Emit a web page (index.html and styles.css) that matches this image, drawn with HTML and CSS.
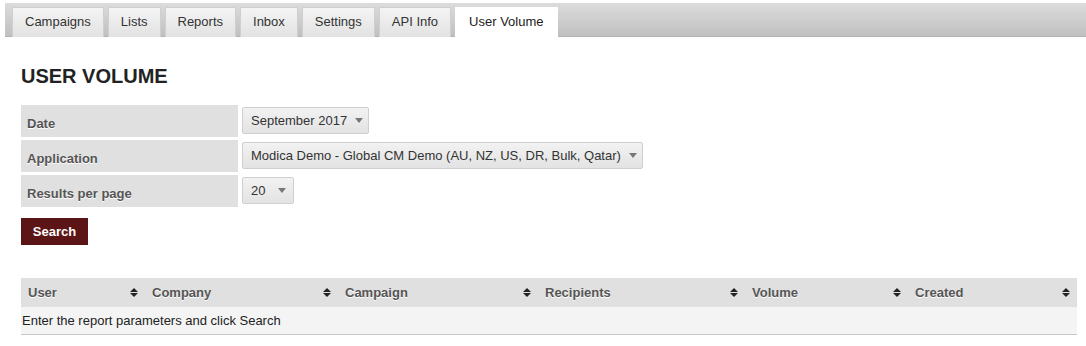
FILE: index.html
```html
<!DOCTYPE html>
<html>
<head lang="en">
    <meta charset="UTF-8">
    <title>User Volume</title>
    <link rel="stylesheet" href="styles.css">
</head>
<body>

    <!-- tabs -->
    <div class="tabs">
        <a class="tab" href="#">Campaigns</a>
        <a class="tab" href="#">Lists</a>
        <a class="tab" href="#">Reports</a>
        <a class="tab" href="#">Inbox</a>
        <a class="tab" href="#">Settings</a>
        <a class="tab" href="#">API Info</a>
        <a class="tab current" href="#">User Volume</a>
    </div>

    <div class="content">
        <h1>USER VOLUME</h1>

        <div class="form">
            <div class="label">Date</div>
            <div class="field"><span class="select">September 2017<i class="caret"></i></span></div>
            <div class="label">Application</div>
            <div class="field"><span class="select">Modica Demo - Global CM Demo (AU, NZ, US, DR, Bulk, Qatar)<i class="caret"></i></span></div>
            <div class="label">Results per page</div>
            <div class="field"><span class="select">20<i class="caret wide"></i></span></div>
        </div>

        <button class="btn">Search</button>

        <div class="report">
            <div class="head">
                <div class="th">User<svg width="8" height="9" viewBox="0 0 8 9"><polygon points="0,4 4,0 8,4"/><polygon points="0,5 4,9 8,5"/></svg></div>
                <div class="th">Company<svg width="8" height="9" viewBox="0 0 8 9"><polygon points="0,4 4,0 8,4"/><polygon points="0,5 4,9 8,5"/></svg></div>
                <div class="th">Campaign<svg width="8" height="9" viewBox="0 0 8 9"><polygon points="0,4 4,0 8,4"/><polygon points="0,5 4,9 8,5"/></svg></div>
                <div class="th">Recipients<svg width="8" height="9" viewBox="0 0 8 9"><polygon points="0,4 4,0 8,4"/><polygon points="0,5 4,9 8,5"/></svg></div>
                <div class="th">Volume<svg width="8" height="9" viewBox="0 0 8 9"><polygon points="0,4 4,0 8,4"/><polygon points="0,5 4,9 8,5"/></svg></div>
                <div class="th">Created<svg width="8" height="9" viewBox="0 0 8 9"><polygon points="0,4 4,0 8,4"/><polygon points="0,5 4,9 8,5"/></svg></div>
            </div>
            <div class="empty">Enter the report parameters and click Search</div>
        </div>
    </div>

</body>
</html>
```

FILE: styles.css
```css
* {
    padding: 0;
    margin: 0;
    box-sizing: border-box;
}
body {
    font-family: "Liberation Sans", Arial, sans-serif;
    font-size: 13px;
    color: #222;
    background: #fff;
}
.tabs {
    display: flex;
    gap: 4px;
    margin: 3px 0 0 5px;
    padding: 4px 0 0 7px;
    height: 34px;
    background: linear-gradient(#dcdcdc, #c0c0c0);
    border-bottom: 1px solid #b4b4b4;
}
.tab {
    display: block;
    height: 30px;
    line-height: 28px;
    padding: 0 12px;
    border: 1px solid #cfcfcf;
    border-bottom: none;
    background: linear-gradient(#f4f4f4, #e2e2e2);
    color: #333;
    text-decoration: none;
}
.tab.current {
    height: 31px;
    background: #fff;
    color: #222;
    border-color: #fff;
    padding: 0 13px;
}
.content {
    padding: 0 9px 0 21px;
}
h1 {
    font-size: 20px;
    line-height: 22px;
    font-weight: bold;
    color: #222;
    margin: 28px 0 18px;
}
.form {
    display: grid;
    grid-template-columns: 217px auto;
    grid-auto-rows: 32px;
    row-gap: 3px;
    column-gap: 4px;
}
.label {
    background: #e0e0e0;
    padding: 11px 6px 0;
    font-weight: bold;
    color: #555;
    text-shadow: 0 1px 0 #fff;
}
.field {
    padding-top: 2px;
}
.select {
    display: inline-flex;
    align-items: center;
    height: 27px;
    padding: 0 5px 0 8px;
    border: 1px solid #cfcfcf;
    border-radius: 2px;
    background: linear-gradient(#f2f2f2, #e3e3e3);
    color: #333;
}
.caret {
    display: inline-block;
    width: 0;
    height: 0;
    margin-left: 8px;
    border-left: 4px solid transparent;
    border-right: 4px solid transparent;
    border-top: 5px solid #777;
}
.caret.wide {
    margin-left: 13px;
    margin-right: 2px;
}
.btn {
    display: block;
    margin-top: 11px;
    width: 67px;
    height: 27px;
    border: none;
    background: #5c1517;
    color: #fff;
    font-family: inherit;
    font-size: 13px;
    font-weight: bold;
}
.report {
    margin-top: 33px;
    width: 1056px;
    border-bottom: 1px solid #c8c8c8;
}
.head {
    display: grid;
    grid-template-columns: 124px 193px 200px 207px 163px 169px;
    height: 29px;
    background: #e0e0e0;
}
.th {
    display: flex;
    align-items: center;
    justify-content: space-between;
    padding: 0 7px;
    font-weight: bold;
    color: #555;
    text-shadow: 0 1px 0 #fff;
}
.th svg {
    fill: #222;
}
.empty {
    height: 27px;
    line-height: 27px;
    padding-left: 1px;
    background: #f4f4f4;
    color: #222;
}
```
